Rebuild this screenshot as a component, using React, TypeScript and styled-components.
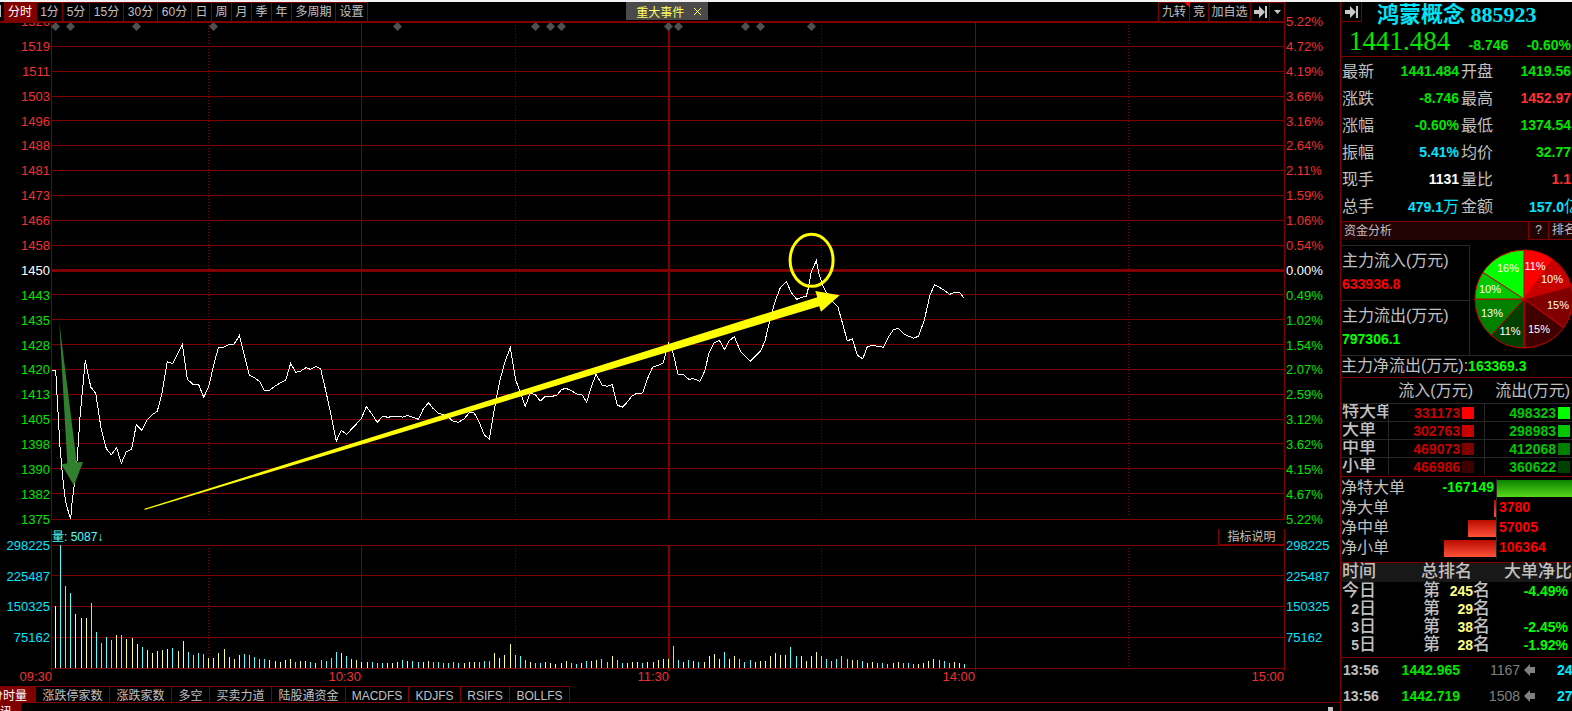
import React from "react";
import styled, { createGlobalStyle } from "styled-components";

const RED = "#800000";
const SANS = '"Liberation Sans", "Noto Sans CJK SC", sans-serif';

const GlobalStyle = createGlobalStyle`
  * { box-sizing: border-box; }
  body { margin: 0; background: #000; color: #c0c0c0; font-family: ${SANS}; font-size: 13px; }
  button { font-family: inherit; color: inherit; background: none; border: 0; padding: 0; margin: 0; }
`;

/* ---------- shell ---------- */

const Page = styled.div`
  display: flex;
  height: 100vh;
  overflow: hidden;
  border-top: 2px solid #f2f2f2;
`;

const Main = styled.main`
  flex: 1;
  min-width: 0;
`;

/* ---------- toolbar ---------- */

const Toolbar = styled.nav`
  position: relative;
  z-index: 1;
  display: flex;
  height: 21px;
  margin-right: 55px;
  background: #000;
  border-bottom: 2px solid ${RED};
`;

const Group = styled.div`
  display: flex;
`;

const Stub = styled.span`
  width: 1px;
  height: 12px;
  margin: 3px 3px 0 0;
  background: #c0c0c0;
`;

const ToolButton = styled.button<{ $w: number; $active?: boolean }>`
  position: relative;
  display: flex;
  align-items: center;
  justify-content: center;
  width: ${(p) => p.$w}px;
  font-size: 12px;
  line-height: 18px;
  white-space: nowrap;
  border-top: 1px solid ${RED};
  border-right: 1px solid ${RED};
  background: ${(p) => (p.$active ? RED : "transparent")};
  color: ${(p) => (p.$active ? "#fff" : "#c0c0c0")};
`;

const RightGroup = styled(Group)`
  border-left: 1px solid ${RED};
`;

const Spacer = styled.div<{ $grow: number }>`
  flex: ${(p) => p.$grow} 1 0;
`;

const EventTag = styled.div`
  display: flex;
  align-items: center;
  justify-content: space-between;
  width: 82px;
  height: 18px;
  padding: 0 7px 0 10px;
  background: #4a4a4a;
  color: #ffff60;
  font-size: 12px;
`;

const CloseButton = styled.button`
  display: flex;
`;

const Corner = styled.span`
  position: absolute;
  top: -1px;
  right: -1px;
  border: 3px solid transparent;
  border-top-color: #f00;
  border-right-color: #f00;
`;

/* ---------- charts ---------- */

const PriceRow = styled.section`
  display: flex;
  align-items: flex-start;
  height: 506px;
`;

const VolumeRow = styled(PriceRow)`
  height: 140px;
`;

const Axis = styled.div<{ $side: "left" | "right"; $height: number; $offset: number }>`
  display: flex;
  flex: none;
  flex-direction: column;
  justify-content: space-between;
  width: ${(p) => (p.$side === "left" ? 51 : 55)}px;
  height: ${(p) => p.$height}px;
  margin-top: ${(p) => p.$offset}px;
  padding: 0 1px;
  text-align: ${(p) => (p.$side === "left" ? "right" : "left")};
`;

const AxisLabel = styled.span<{ $color: string }>`
  font-size: 13px;
  line-height: 20px;
  color: ${(p) => p.$color};
`;

const Plot = styled.div`
  position: relative;
  flex: 1;
  min-width: 0;
`;

const Canvas = styled.svg<{ $height: number }>`
  display: block;
  width: 100%;
  height: ${(p) => p.$height}px;
  overflow: visible;
`;

const Legend = styled.div`
  position: absolute;
  top: 0;
  left: 1px;
  right: 1px;
  display: flex;
  justify-content: space-between;
  height: 17px;
  line-height: 16px;
`;

const LegendText = styled.span`
  font-size: 12px;
  color: #50ffff;
`;

const HelpButton = styled.button`
  width: 66px;
  font-size: 12px;
  line-height: 14px;
  border-left: 1px solid ${RED};
  border-bottom: 2px solid ${RED};
`;

const TimeRow = styled.div`
  display: grid;
  grid-template-columns: 52px 309fr 308fr 306fr 309fr 56px;
  height: 17px;
  line-height: 15px;
  font-size: 13px;
  color: #f03030;
  text-align: right;
`;

const IndicatorTabs = styled.nav`
  display: flex;
  height: 17px;
  border-bottom: 1px solid ${RED};
`;

const IndicatorTab = styled.button<{ $w: number; $active?: boolean }>`
  display: flex;
  justify-content: ${(p) => (p.$active ? "flex-end" : "center")};
  width: ${(p) => p.$w}px;
  overflow: hidden;
  padding-top: 1px;
  padding-right: ${(p) => (p.$active ? 8 : 0)}px;
  font-size: 12px;
  line-height: 16px;
  white-space: nowrap;
  border-top: 1px solid ${RED};
  border-right: 1px solid ${RED};
  background: ${(p) => (p.$active ? RED : "transparent")};
  color: ${(p) => (p.$active ? "#fff" : "#c0c0c0")};
`;

const Footer = styled.div`
  display: flex;
  align-items: flex-start;
  justify-content: space-between;
  padding-right: 7px;
`;

const NewsTab = styled(IndicatorTab)`
  height: 18px;
  border-top: 0;
`;

const Grip = styled.span`
  width: 5px;
  height: 5px;
  margin-top: 4px;
  background: #c0c0c0;
`;

/* ---------- side panel ---------- */

const Side = styled.aside`
  flex: none;
  width: 232px;
  overflow: hidden;
  border-left: 1px solid ${RED};
`;

const SideHeader = styled.header`
  height: 55px;
  border-bottom: 1px solid ${RED};
`;

const TitleRow = styled.div`
  display: flex;
  align-items: flex-start;
  height: 24px;
`;

const CollapseButton = styled.button`
  display: flex;
  align-items: center;
  justify-content: center;
  width: 21px;
  height: 20px;
  border-right: 1px solid ${RED};
  border-bottom: 1px solid ${RED};
`;

const Title = styled.h1`
  margin: 0 0 0 15px;
  font: bold 22px/26px "Liberation Serif", "Noto Sans CJK SC", serif;
  color: #00e5f5;
  white-space: nowrap;
`;

const PriceLine = styled.div`
  display: flex;
  align-items: baseline;
  justify-content: space-between;
  padding: 0 1px 0 8px;
  line-height: 30px;
  font-size: 14px;
  font-weight: bold;
  color: #00e600;
`;

const BigPrice = styled.span`
  font: 27px/30px "Liberation Serif", serif;
`;

const Quotes = styled.dl`
  margin: 0;
  padding: 1px 1px 0 1px;
`;

const QuoteRow = styled.div`
  display: grid;
  grid-template-columns: 32px 83px 32px 1fr;
  column-gap: 2px;
  line-height: 27px;
`;

const QuoteLabel = styled.dt`
  font-size: 16px;
`;

const QuoteValue = styled.dd<{ $color: string; $bleed?: boolean }>`
  margin: 0 ${(p) => (p.$bleed ? -9 : 0)}px 0 0;
  font-size: 14px;
  font-weight: bold;
  text-align: right;
  white-space: nowrap;
  color: ${(p) => p.$color};
`;

const Unit = styled.span`
  font-size: 16px;
  font-weight: normal;
`;

const SectionBar = styled.div`
  display: flex;
  height: 19px;
  padding-left: 3px;
  line-height: 18px;
  font-size: 12px;
  background: #200404;
  border-top: 1px solid ${RED};
`;

const SectionTitle = styled.h2`
  flex: 1;
  margin: 0;
  font-size: 12px;
  font-weight: normal;
`;

const SectionButton = styled.button<{ $w: number; $center?: boolean }>`
  width: ${(p) => p.$w}px;
  overflow: hidden;
  padding-left: ${(p) => (p.$center ? 0 : 3)}px;
  text-align: ${(p) => (p.$center ? "center" : "left")};
  white-space: nowrap;
  font-size: 12px;
  line-height: 17px;
  border-left: 1px solid ${RED};
  border-bottom: 1px solid ${RED};
`;

const FlowSummary = styled.div`
  display: flex;
  margin-top: 5px;
  border-bottom: 1px solid #282828;
`;

const FlowBoxes = styled.div`
  flex: none;
  width: 129px;
  border-right: 1px solid #282828;
`;

const FlowBox = styled.div`
  height: 55px;
  padding: 3px 0 0 1px;
  border-top: 1px solid #282828;
`;

const FlowLabel = styled.div`
  font-size: 16px;
  line-height: 24px;
  white-space: nowrap;
`;

const Strong = styled.strong<{ $color: string }>`
  font-size: 14px;
  font-weight: bold;
  color: ${(p) => p.$color};
`;

const FlowValue = styled(Strong)`
  display: block;
  line-height: 22px;
`;

const PieSvg = styled.svg`
  flex: none;
  width: 110px;
  height: 110px;
`;

const PieText = styled.text`
  font: 11px "Liberation Sans Narrow", "Liberation Sans", sans-serif;
  fill: #fff;
  text-anchor: middle;
`;

const NetTotal = styled.div`
  height: 22px;
  line-height: 20px;
  font-size: 16px;
  white-space: nowrap;
  border-bottom: 1px solid ${RED};
`;

const OrderTable = styled.table`
  width: 100%;
  table-layout: fixed;
  border-spacing: 0;
  margin-bottom: 1px;
`;

const OrderHead = styled.th<{ $w?: number; $pad?: number }>`
  width: ${(p) => (p.$w ? `${p.$w}px` : "auto")};
  height: 25px;
  padding: 0 ${(p) => p.$pad ?? 0}px 0 0;
  font-size: 16px;
  font-weight: normal;
  line-height: 24px;
  text-align: right;
  white-space: nowrap;
`;

const OrderName = styled.th`
  height: 18px;
  padding: 0 0 2px 1px;
  overflow: hidden;
  text-align: left;
  white-space: nowrap;
  font-size: 17px;
  font-weight: 500;
  line-height: 15px;
  border-top: 1px solid #282828;
`;

const OrderCell = styled.td<{ $pad: number }>`
  height: 18px;
  padding: 0 ${(p) => p.$pad}px 0 0;
  border-top: 1px solid #282828;
  border-left: 1px solid #282828;
`;

const CellInner = styled.div<{ $color: string }>`
  display: flex;
  align-items: center;
  justify-content: flex-end;
  gap: 2px;
  height: 17px;
  line-height: 16px;
  font-size: 14px;
  font-weight: bold;
  color: ${(p) => p.$color};
`;

const Swatch = styled.span<{ $color: string }>`
  width: 12px;
  height: 12px;
  background: ${(p) => p.$color};
`;

const NetBars = styled.div`
  padding: 2px 0 3px;
  border-top: 1px solid ${RED};
  border-bottom: 1px solid ${RED};
`;

const NetRow = styled.div`
  display: flex;
  height: 20px;
  line-height: 17px;
`;

const NetLeft = styled.div`
  display: flex;
  flex: none;
  justify-content: space-between;
  width: 155px;
  font-size: 16px;
`;

const NetRight = styled.div`
  display: flex;
  flex: 1;
  min-width: 0;
  overflow: hidden;
  border-left: 1px solid #282828;
`;

const NetValue = styled(Strong)`
  padding: 0 2px;
`;

const Bar = styled.span<{ $up?: boolean }>`
  height: 17px;
  margin-top: 1px;
  background: ${(p) =>
    p.$up ? "linear-gradient(#b80c00, #ff5038)" : "linear-gradient(#0a8200, #58d818)"};
`;

const RankTable = styled.table`
  width: 100%;
  table-layout: fixed;
  border-spacing: 0;
  font-size: 17px;
  font-weight: 500;
`;

const RankHead = styled.th<{ $w?: number; $pad?: number }>`
  width: ${(p) => (p.$w ? `${p.$w}px` : "auto")};
  height: 19px;
  padding: 0 ${(p) => p.$pad ?? 0}px 2px 0;
  font-weight: 500;
  line-height: 17px;
  text-align: right;
  white-space: nowrap;
  background: #181818;
`;

const RankCell = styled.td<{ $pad?: number; $color?: string }>`
  height: 18px;
  padding: 0 ${(p) => p.$pad ?? 0}px 0 0;
  line-height: 18px;
  text-align: right;
  white-space: nowrap;
  color: ${(p) => p.$color ?? "#c0c0c0"};
`;

const Digits = styled.b`
  font-size: 14px;
  line-height: 16px;
`;

const RankInner = styled.div`
  display: flex;
  justify-content: flex-end;
`;

const RankNumber = styled.b`
  width: 33px;
  font-size: 14px;
  color: #ffff80;
`;

const Ticks = styled.div`
  margin-top: 3px;
  border-top: 1px solid ${RED};
`;

const TickRow = styled.div`
  display: grid;
  grid-template-columns: 35px 82px 60px 37px 1fr;
  align-items: center;
  height: 26px;
  padding: 0 0 2px 2px;
  line-height: 24px;
  font-size: 14px;
  text-align: right;
`;

const TickTime = styled.time`
  text-align: left;
  font-weight: bold;
`;

const TickVolume = styled.span`
  color: #808080;
`;

const TickArrow = styled.svg`
  width: 11px;
  height: 12px;
  margin-left: 4px;
`;

const TickCount = styled(Strong)`
  text-align: left;
`;

/* ---------- data ---------- */

const PERIODS: [string, number][] = [
  ["分时", 33], ["1分", 26], ["5分", 27], ["15分", 34], ["30分", 34], ["60分", 34],
  ["日", 20], ["周", 20], ["月", 20], ["季", 20], ["年", 20], ["多周期", 44], ["设置", 32],
];

const PRICES = [1526, 1519, 1511, 1503, 1496, 1488, 1481, 1473, 1466, 1458, 1450, 1443, 1435, 1428, 1420, 1413, 1405, 1398, 1390, 1382, 1375];
const PERCENTS = ["5.22", "4.72", "4.19", "3.66", "3.16", "2.64", "2.11", "1.59", "1.06", "0.54", "0.00", "0.49", "1.02", "1.54", "2.07", "2.59", "3.12", "3.62", "4.15", "4.67", "5.22"];
const VOLUMES = [298225, 225487, 150325, 75162];

const levelColor = (i: number) => (i < 10 ? "#f03030" : i === 10 ? "#fff" : "#00e600");

const GRID_Y = [46, 71, 96, 120, 145, 170, 195, 220, 245, 294, 319, 344, 369, 394, 419, 443, 468, 493, 519];
const DOTTED_X = [208, 515, 821, 1128];
const SOLID_X = [51, 361, 975, 1284];
const DIAMONDS = [55, 70, 136, 213, 397, 535, 550, 561, 668, 678, 745, 760, 811];

// Price samples in thirds of a unit, as x, y pairs measured from each segment's origin.
const SEGMENTS: { x: number; y: number; pts: string }[] = [
  {
    x: 0, y: 300,
    pts: "157,211 167,211 172,300 180,440 187,520 196,600 207,643 212,656 217,600 223,555 232,475 240,350 256,181 272,261 287,280 303,384 319,446 334,464 350,443 364,490 379,455 395,447 409,374 425,391 441,359 458,343 472,334 487,275 502,185 518,191 547,133 562,238 579,253 596,254 611,292 626,260 640,200 655,143 670,142 686,134 702,133 718,107 733,165 748,225 764,233 779,245 793,271 809,271 825,258 857,240 872,190 887,217 902,213 918,203 931,208 948,199 962,207 978,275 993,345 1009,423 1024,391 1040,403 1084,356 1099,320 1116,343 1132,367 1148,349 1164,352 1180,349 1200,349",
  },
  {
    x: 400, y: 320,
    pts: "8,292 22,286 38,292 55,298 70,267 86,248 98,264 114,279 132,285 145,292 160,304 175,307 192,297 208,278 222,278 238,307 253,345 268,357 284,262 300,180 316,122 331,83 347,180 362,220 376,259 390,221 405,223 421,243 436,229 456,229 471,226 484,209 497,205 512,211 530,222 545,223 560,246 573,203 588,163 607,196 622,199 637,194 652,255 667,262 682,246 695,229 710,220 728,219 743,175 758,141 775,136 790,129 797,98 806,70 818,95 834,162 850,163 866,178 880,176 900,184 914,153 927,100 942,69 958,61 974,89 988,62 1003,50 1022,95",
  },
  {
    x: 740, y: 220,
    pts: "31,424 62,393 75,362 90,300 105,245 121,203 139,185 155,220 170,238 185,232 199,229 205,205 214,155 229,122 238,165 250,200 262,222 278,246 294,262 308,312 322,363 337,356 352,405 368,417 382,380 398,376 430,382 445,352 460,329 475,325 493,343 521,355 536,348 553,300 570,225 584,194 607,207 629,223 645,217 659,217 671,233",
  },
];

const PRICE_POINTS = SEGMENTS.flatMap((s) =>
  s.pts.split(" ").map((p) => {
    const [x, y] = p.split(",").map(Number);
    return `${(s.x + x / 3).toFixed(1)},${(s.y + y / 3).toFixed(1)}`;
  })
).join(" ");

// One bar per minute: w = opening, c = falling, y = rising, followed by its height.
const BARS = (
  "w62 c123 c82 c75 y54 y50 y50 c65 c36 c25 c31 c28 y33 c33 y29 y30 y24 c21 y18 y15 y17 y18 y19 c20 y17 y27 c16 c13 c15 c14 " +
  "y10 y10 y15 y19 y11 y9 y13 c14 c13 c11 c9 c9 y8 y7 y6 y8 y9 c6 y7 y7 c6 y5 c8 c7 c10 c16 y15 c12 y9 y8 " +
  "y6 y6 c6 c5 c5 y5 y5 y6 c8 y7 c7 c6 y6 y7 c6 c6 c5 c5 c6 c5 y5 y6 y6 c6 c7 c7 y15 y10 y13 y24 " +
  "c13 c12 c8 y6 c5 c5 y6 y5 y4 y5 y7 c5 c4 y5 c7 y7 y8 c9 c6 y12 c8 c5 y5 y6 y6 c5 y6 y6 y8 y9 " +
  "y9 c22 c8 y6 c8 y7 c6 y6 y12 y14 y9 c16 y9 y12 c9 c6 c8 y6 y7 y7 y12 y15 y13 y13 c21 c12 y12 y7 y12 y16 " +
  "c12 c9 c7 c9 c12 c9 y8 c8 c7 y5 y6 c5 c5 c4 y5 y6 c5 c5 c4 y4 y5 y7 y9 c8 c7 c5 y6 y5 c4"
).split(" ");
const BAR_COLORS: Record<string, string> = { w: "#fff", c: "#50ffff", y: "#ffff80" };

const INDICATORS: [string, number][] = [
  ["分时量", 36], ["涨跌停家数", 74], ["涨跌家数", 62], ["多空", 38], ["买卖力道", 62],
  ["陆股通资金", 74], ["MACDFS", 63], ["KDJFS", 52], ["RSIFS", 49], ["BOLLFS", 60],
];

const G = "#00e600";
const R = "#ff3030";
const C = "#00e5ff";

type Quote = { label: string; value: string; unit?: string; color: string };
const QUOTES: [Quote, Quote][] = [
  [{ label: "最新", value: "1441.484", color: G }, { label: "开盘", value: "1419.56", color: G }],
  [{ label: "涨跌", value: "-8.746", color: G }, { label: "最高", value: "1452.97", color: R }],
  [{ label: "涨幅", value: "-0.60%", color: G }, { label: "最低", value: "1374.54", color: G }],
  [{ label: "振幅", value: "5.41%", color: C }, { label: "均价", value: "32.77", color: G }],
  [{ label: "现手", value: "1131", color: "#fff" }, { label: "量比", value: "1.1", color: R }],
  [{ label: "总手", value: "479.1", unit: "万", color: C }, { label: "金额", value: "157.0", unit: "亿", color: C }],
];

const SLICES = [
  { to: 36, label: "11%", color: "#ff0000", x: 65, y: 25 },
  { to: 75, label: "10%", color: "#c80000", x: 82, y: 38 },
  { to: 126, label: "15%", color: "#800000", x: 88, y: 64 },
  { to: 180, label: "15%", color: "#400000", x: 69, y: 88 },
  { to: 222, label: "11%", color: "#004000", x: 40, y: 90 },
  { to: 270, label: "13%", color: "#008000", x: 22, y: 72 },
  { to: 303, label: "10%", color: "#00c800", x: 20, y: 48 },
  { to: 360, label: "16%", color: "#00ff00", x: 38, y: 27 },
];

const ORDERS = [
  { name: "特大单", inflow: 331173, outflow: 498323, red: "#ff0000", green: "#00ff00" },
  { name: "大单", inflow: 302763, outflow: 298983, red: "#c80000", green: "#00c800" },
  { name: "中单", inflow: 469073, outflow: 412068, red: "#800000", green: "#008000" },
  { name: "小单", inflow: 466986, outflow: 360622, red: "#400000", green: "#004000" },
];

const NETS = [
  { name: "净特大单", value: -167149, width: 80 },
  { name: "净大单", value: 3780, width: 2 },
  { name: "净中单", value: 57005, width: 28 },
  { name: "净小单", value: 106364, width: 52 },
];

const RANKS = [
  { day: "今", rank: 245, ratio: "-4.49%" },
  { day: "2", rank: 29, ratio: "" },
  { day: "3", rank: 38, ratio: "-2.45%" },
  { day: "5", rank: 28, ratio: "-1.92%" },
];

const TICKS = [
  { time: "13:56", price: "1442.965", volume: 1167, count: 24 },
  { time: "13:56", price: "1442.719", volume: 1508, count: 27 },
];

/* ---------- parts ---------- */

const ArrowToBar = () => (
  <svg width="13" height="12" viewBox="0 0 13 12" fill="#c8c8c8" aria-hidden="true">
    <path d="M0 4H5V0L11 6L5 12V8H0Z" />
    <rect x="11" width="2" height="12" />
  </svg>
);

const VerticalLines = ({ top, bottom, dotTop }: { top: number; bottom: number; dotTop: number }) => (
  <g fill={RED} shapeRendering="crispEdges">
    {SOLID_X.map((x) => (
      <rect key={x} x={x} y={top} width="1" height={bottom - top} />
    ))}
    <rect x="668" y={top} width="2" height={bottom - top} />
    {DOTTED_X.map((x) => (
      <path key={x} d={`M${x + 0.5} ${dotTop}V${bottom - 3}`} stroke={RED} strokeDasharray="1 2" />
    ))}
  </g>
);

const PriceChart = () => (
  <Canvas $height={497} viewBox="51 23 1234 497" preserveAspectRatio="none" role="img" aria-label="分时走势">
    <g fill={RED} shapeRendering="crispEdges">
      {GRID_Y.map((y) => (
        <rect key={y} x="51" y={y} width="1234" height="1" />
      ))}
      <rect x="51" y="269" width="1234" height="3" />
    </g>
    <VerticalLines top={23} bottom={520} dotTop={25} />
    <g fill="#505050">
      {DIAMONDS.map((x) => (
        <path key={x} d={`M${x + 0.5} 22L${x + 5} 26.5L${x + 0.5} 31L${x - 4} 26.5Z`} />
      ))}
    </g>
    <polyline points={PRICE_POINTS} fill="none" stroke="#fff" strokeWidth="1" shapeRendering="crispEdges" />
    <path d="M59.3 322.5L76.7 462.3L83 462L74 485.5L61.3 464.3L67.3 463.3Z" fill="#308030" />
    <path d="M144.5 508.7L817.3 297.3L815.3 291L839.7 295.3L821 311.7L819.3 306.3L144.5 510Z" fill="#ff0" />
    <ellipse cx="811.6" cy="260.3" rx="21.5" ry="26" fill="none" stroke="#ff0" strokeWidth="3" />
  </Canvas>
);

const VolumeChart = () => (
  <Canvas $height={140} viewBox="51 529 1234 140" preserveAspectRatio="none" role="img" aria-label="成交量">
    <g fill={RED} shapeRendering="crispEdges">
      {[545, 575, 606, 637, 668].map((y) => (
        <rect key={y} x="51" y={y} width="1234" height="1" />
      ))}
      <rect x="51" y="529" width="1" height="16" />
      <rect x="1284" y="529" width="1" height="16" />
    </g>
    <VerticalLines top={545} bottom={671} dotTop={548} />
    <g shapeRendering="crispEdges">
      {BARS.map((b, i) => {
        const h = Number(b.slice(1));
        return <rect key={i} x={Math.round(55 + i * 5.107)} y={668 - h} width="1" height={h} fill={BAR_COLORS[b[0]]} />;
      })}
    </g>
  </Canvas>
);

const CX = 54;
const CY = 54;
const RADIUS = 49;
const onCircle = (deg: number) => {
  const a = (deg * Math.PI) / 180;
  return `${(CX + RADIUS * Math.sin(a)).toFixed(2)} ${(CY - RADIUS * Math.cos(a)).toFixed(2)}`;
};

const Pie = () => (
  <PieSvg viewBox="0 0 110 110" role="img" aria-label="资金分布">
    {SLICES.map((s, i) => (
      <path
        key={i}
        d={`M${CX} ${CY}L${onCircle(i ? SLICES[i - 1].to : 0)}A${RADIUS} ${RADIUS} 0 0 1 ${onCircle(s.to)}Z`}
        fill={s.color}
        stroke="#c80000"
      />
    ))}
    {SLICES.map((s, i) => (
      <PieText key={i} x={s.x} y={s.y}>{s.label}</PieText>
    ))}
  </PieSvg>
);

const QuotePair = ({ quote, bleed }: { quote: Quote; bleed?: boolean }) => (
  <>
    <QuoteLabel>{quote.label}</QuoteLabel>
    <QuoteValue $color={quote.color} $bleed={bleed}>
      {quote.value}
      {quote.unit && <Unit>{quote.unit}</Unit>}
    </QuoteValue>
  </>
);

export default function App() {
  return (
    <Page>
      <GlobalStyle />
      <Main>
        <Toolbar>
          <Group>
            <Stub />
            {PERIODS.map(([name, w], i) => (
              <ToolButton key={name} $w={w} $active={i === 0}>{name}</ToolButton>
            ))}
          </Group>
          <Spacer $grow={258} />
          <EventTag>
            重大事件
            <CloseButton aria-label="关闭">
              <svg width="7" height="7" viewBox="0 0 7 7" stroke="#ffff60" aria-hidden="true">
                <path d="M0 0L7 7M7 0L0 7" />
              </svg>
            </CloseButton>
          </EventTag>
          <Spacer $grow={449} />
          <RightGroup>
            <ToolButton $w={31}>九转<Corner /></ToolButton>
            <ToolButton $w={19}>竞</ToolButton>
            <ToolButton $w={42}>加自选</ToolButton>
            <ToolButton $w={19} aria-label="展开"><ArrowToBar /></ToolButton>
            <ToolButton $w={15} aria-label="更多">
              <svg width="7" height="4" viewBox="0 0 7 4" fill="#c8c8c8" aria-hidden="true">
                <path d="M0 0H7L3.500 4Z" />
              </svg>
            </ToolButton>
          </RightGroup>
        </Toolbar>

        <PriceRow>
          <Axis $side="left" $height={518} $offset={-11}>
            {PRICES.map((p, i) => (
              <AxisLabel key={p} $color={levelColor(i)}>{p}</AxisLabel>
            ))}
          </Axis>
          <Plot><PriceChart /></Plot>
          <Axis $side="right" $height={518} $offset={-11}>
            {PERCENTS.map((p, i) => (
              <AxisLabel key={i} $color={levelColor(i)}>{p}%</AxisLabel>
            ))}
          </Axis>
        </PriceRow>

        <VolumeRow>
          <Axis $side="left" $height={112} $offset={7}>
            {VOLUMES.map((v) => <AxisLabel key={v} $color={C}>{v}</AxisLabel>)}
          </Axis>
          <Plot>
            <VolumeChart />
            <Legend>
              <LegendText>量: 5087↓</LegendText>
              <HelpButton>指标说明</HelpButton>
            </Legend>
          </Plot>
          <Axis $side="right" $height={112} $offset={7}>
            {VOLUMES.map((v) => <AxisLabel key={v} $color={C}>{v}</AxisLabel>)}
          </Axis>
        </VolumeRow>

        <TimeRow>
          {["09:30", "10:30", "11:30", "14:00", "15:00"].map((t) => <span key={t}>{t}</span>)}
        </TimeRow>

        <IndicatorTabs>
          {INDICATORS.map(([name, w], i) => (
            <IndicatorTab key={name} $w={w} $active={i === 0}>{name}</IndicatorTab>
          ))}
        </IndicatorTabs>
        <Footer>
          <NewsTab $w={21} $active>资讯</NewsTab>
          <Grip />
        </Footer>
      </Main>

      <Side>
        <SideHeader>
          <TitleRow>
            <CollapseButton aria-label="收起"><ArrowToBar /></CollapseButton>
            <Title>鸿蒙概念 885923</Title>
          </TitleRow>
          <PriceLine>
            <BigPrice>1441.484</BigPrice>
            <span>-8.746</span>
            <span>-0.60%</span>
          </PriceLine>
        </SideHeader>

        <Quotes>
          {QUOTES.map(([a, b]) => (
            <QuoteRow key={a.label}>
              <QuotePair quote={a} />
              <QuotePair quote={b} bleed={!!b.unit} />
            </QuoteRow>
          ))}
        </Quotes>

        <SectionBar>
          <SectionTitle>资金分析</SectionTitle>
          <SectionButton $w={20} $center>?</SectionButton>
          <SectionButton $w={24}>排名</SectionButton>
        </SectionBar>

        <FlowSummary>
          <FlowBoxes>
            <FlowBox>
              <FlowLabel>主力流入(万元)</FlowLabel>
              <FlowValue $color="#f00">633936.8</FlowValue>
            </FlowBox>
            <FlowBox>
              <FlowLabel>主力流出(万元)</FlowLabel>
              <FlowValue $color="#0f0">797306.1</FlowValue>
            </FlowBox>
          </FlowBoxes>
          <Pie />
        </FlowSummary>
        <NetTotal>
          主力净流出(万元):<Strong $color="#0f0">163369.3</Strong>
        </NetTotal>

        <OrderTable>
          <thead>
            <tr>
              <OrderHead $w={47} />
              <OrderHead $w={96} $pad={11}>流入(万元)</OrderHead>
              <OrderHead $pad={2}>流出(万元)</OrderHead>
            </tr>
          </thead>
          <tbody>
            {ORDERS.map((o) => (
              <tr key={o.name}>
                <OrderName scope="row">{o.name}</OrderName>
                <OrderCell $pad={10}>
                  <CellInner $color="#c80000">{o.inflow}<Swatch $color={o.red} /></CellInner>
                </OrderCell>
                <OrderCell $pad={2}>
                  <CellInner $color="#00c800">{o.outflow}<Swatch $color={o.green} /></CellInner>
                </OrderCell>
              </tr>
            ))}
          </tbody>
        </OrderTable>

        <NetBars>
          {NETS.map((n) => (
            <NetRow key={n.name}>
              <NetLeft>
                {n.name}
                {n.value < 0 ? (
                  <NetValue $color="#0f0">{n.value}</NetValue>
                ) : (
                  <Bar $up style={{ width: n.width }} />
                )}
              </NetLeft>
              <NetRight>
                {n.value < 0 ? (
                  <Bar style={{ width: n.width }} />
                ) : (
                  <NetValue $color="#f00">{n.value}</NetValue>
                )}
              </NetRight>
            </NetRow>
          ))}
        </NetBars>

        <RankTable>
          <thead>
            <tr>
              <RankHead $w={35}>时间</RankHead>
              <RankHead $w={114} $pad={18}>总排名</RankHead>
              <RankHead>大单净比</RankHead>
            </tr>
          </thead>
          <tbody>
            {RANKS.map((r) => (
              <tr key={r.day}>
                <RankCell>{r.day === "今" ? r.day : <Digits>{r.day}</Digits>}日</RankCell>
                <RankCell>
                  <RankInner>第<RankNumber>{r.rank}</RankNumber>名</RankInner>
                </RankCell>
                <RankCell $pad={4} $color="#0f0"><Digits>{r.ratio}</Digits></RankCell>
              </tr>
            ))}
          </tbody>
        </RankTable>

        <Ticks>
          {TICKS.map((t) => (
            <TickRow key={t.price}>
              <TickTime>{t.time}</TickTime>
              <Strong $color={G}>{t.price}</Strong>
              <TickVolume>{t.volume}</TickVolume>
              <TickArrow viewBox="0 0 11 12" fill="#808080" aria-hidden="true">
                <path d="M0 6L6 0V3H11V9H6V12Z" />
              </TickArrow>
              <TickCount $color={C}>{t.count}</TickCount>
            </TickRow>
          ))}
        </Ticks>
      </Side>
    </Page>
  );
}
